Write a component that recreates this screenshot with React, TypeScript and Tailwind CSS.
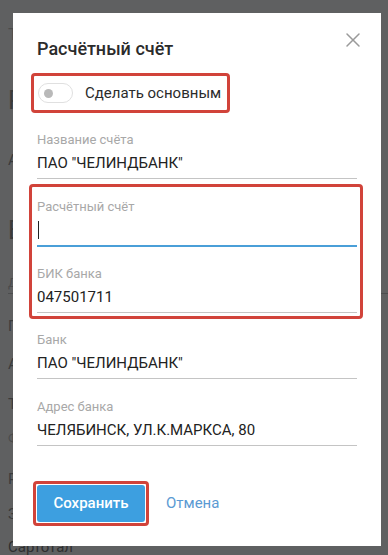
import { X } from 'lucide-react';

interface BgRow {
  text: string;
  cls: string;
}

// page behind the dialog, only the left edge shows
const bgRows: BgRow[] = [
  { text: 'Т', cls: 'mt-[20px] h-[30px] text-[17px] text-[#4a4b4c]' },
  { text: 'Рк', cls: 'mt-[35px] h-[30px] text-[26px] text-[#3a3b3c]' },
  { text: 'Ад', cls: 'mt-[30px] h-[30px] text-[15px] text-[#3a3b3c]' },
  { text: 'Бн', cls: 'mt-[40px] h-[30px] text-[26px] text-[#3a3b3c]' },
  { text: 'Дн', cls: 'mt-[27px] h-[22px] text-[13px] text-[#4a4b4c] border-b border-[#4c4d4e]' },
  { text: 'По', cls: 'mt-[17px] h-[30px] text-[15px] text-[#3a3b3c]' },
  { text: 'Ад', cls: 'mt-[8px] h-[30px] text-[15px] text-[#3a3b3c]' },
  { text: 'Те', cls: 'mt-[10px] h-[30px] text-[15px] text-[#3a3b3c]' },
  { text: 'Фа', cls: 'mt-[5px] h-[30px] text-[13px] text-[#4a4b4c]' },
  { text: 'Ре', cls: 'mt-[10px] h-[30px] text-[15px] text-[#3a3b3c]' },
  { text: 'За', cls: 'mt-[5px] h-[30px] text-[15px] text-[#3a3b3c]' },
  { text: 'Сартотал', cls: 'mt-[3px] h-[30px] text-[15px] text-[#2e2f30]' },
];

const Field = ({
  label,
  value,
  active,
  className,
}: {
  label: string;
  value?: string;
  active?: boolean;
  className?: string;
}) => (
  <div className={className}>
    <div className="text-[13px] leading-4 text-[#a8a8a8]">{label}</div>
    <div
      className={`mt-[5px] flex h-5 items-center pb-[5px] text-[15px] leading-5 text-[#222] box-content ${
        active ? 'border-b-2 border-[#4a9fd8]' : 'border-b border-[#c4c4c4]'
      }`}
    >
      {active ? <span className="ml-px h-[18px] w-px bg-[#222]" /> : value}
    </div>
  </div>
);

export default function App() {
  return (
    <div className="relative h-[555px] w-[388px] overflow-hidden bg-[#5f6061] font-['Roboto',sans-serif]">
      {/* Background page */}
      <div className="flex flex-col pl-[8px]">
        {bgRows.map((r, i) => (
          <div key={i} className={`flex shrink-0 items-center whitespace-nowrap ${r.cls}`}>
            {r.text}
          </div>
        ))}
      </div>

      {/* Dialog */}
      <div className="absolute left-[13px] top-[13px] flex h-[533px] w-[368px] flex-col bg-white px-6 pt-6">
        <button className="absolute right-[16px] top-[15px] text-[#9a9a9a]">
          <X size={24} strokeWidth={1.5} />
        </button>

        <h2 className="text-[18px] font-medium leading-6 text-[#2b2b2b]">
          Расчётный счёт
        </h2>

        <div className="-ml-[6px] mt-3 flex w-[199px] items-center gap-3 rounded-[4px] border-[3px] border-[#d1433a] py-[7px] pl-1">
          <div className="flex h-[20px] w-[35px] items-center rounded-full border border-[#e0e0e0] bg-white pl-[5px]">
            <div className="h-[9px] w-[9px] rounded-full bg-[#b9b9b9]" />
          </div>
          <span className="text-[15px] leading-5 text-[#2b2b2b]">Сделать основным</span>
        </div>

        <Field className="mt-[19px]" label="Название счёта" value='ПАО "ЧЕЛИНДБАНК"' />

        <div className="-ml-[8px] -mr-[6px] mt-[5px] rounded-[4px] border-[3px] border-[#d1433a] pb-[3px] pl-[5px] pr-[3px] pt-[12px]">
          <Field label="Расчётный счёт" active />
          <Field className="mt-[19px]" label="БИК банка" value="047501711" />
        </div>

        <Field className="mt-[13px]" label="Банк" value='ПАО "ЧЕЛИНДБАНК"' />
        <Field className="mt-[20px]" label="Адрес банка" value="ЧЕЛЯБИНСК, УЛ.К.МАРКСА, 80" />

        <div className="mt-[35px] flex items-center">
          <div className="-ml-1 rounded-[4px] border-[3px] border-[#d1433a] p-px">
            <button className="flex h-[37px] w-[108px] items-center justify-center rounded-[3px] bg-[#3d9fe0] text-[15px] font-medium text-white">
              Сохранить
            </button>
          </div>
          <button className="ml-[17px] text-[15px] text-[#5b9ad3]">Отмена</button>
        </div>
      </div>
    </div>
  );
}
